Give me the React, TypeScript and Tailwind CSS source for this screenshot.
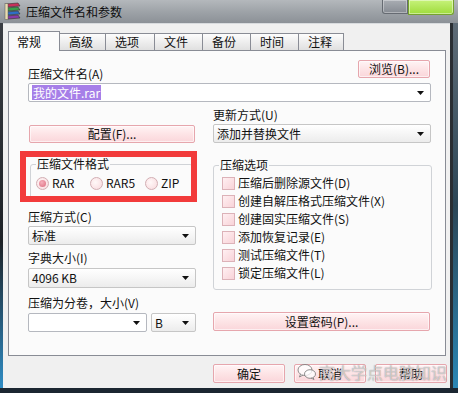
import React from "react";

const Arrow = () => (
  <svg width="7" height="4" viewBox="0 0 7 4" className="shrink-0">
    <path d="M0 0H7L3.5 4Z" fill="#111" />
  </svg>
);

const RarIcon = () => (
  <svg width="19" height="19" viewBox="0 0 19 19">
    <g stroke="#333" strokeWidth="0.6">
      <path d="M3 2 L15 1 L17 4 L5 5 Z" fill="#c8305a" />
      <path d="M3 6 L15 5 L17 8 L5 9 Z" fill="#3aa04a" />
      <path d="M3 10 L15 9 L17 12 L5 13 Z" fill="#2e6fc8" />
      <path d="M3 14 L15 13 L17 16 L5 17 Z" fill="#8a3aa8" />
    </g>
    <rect x="2" y="1.5" width="3" height="16" fill="#e8dcb0" stroke="#555" strokeWidth="0.5" />
  </svg>
);

const WeChat = () => (
  <svg width="20" height="18" viewBox="0 0 20 18">
    <g fill="rgba(255,255,255,0.75)" stroke="rgba(110,110,110,0.75)" strokeWidth="1">
      <ellipse cx="8" cy="7" rx="7" ry="5.5" />
      <path d="M3.5 11 L2.5 14 L6 12" />
      <ellipse cx="13" cy="11" rx="5.5" ry="4.3" />
      <path d="M16 14.5 L17 16.5 L14 15" />
    </g>
  </svg>
);

function PinkBtn({ className = "", children }: { className?: string; children?: React.ReactNode }) {
  return (
    <div
      className={
        "flex items-center justify-center border border-[#e6a6ad] rounded-[2px] bg-[linear-gradient(180deg,#fff4f5_0%,#fde4e6_50%,#fad6da_100%)] shadow-[inset_0_0_0_1px_rgba(255,255,255,0.6)] " +
        className
      }
    >
      {children}
    </div>
  );
}

function Combo({
  className = "",
  children,
  white = false,
}: {
  className?: string;
  children?: React.ReactNode;
  white?: boolean;
}) {
  return (
    <div
      className={
        "flex items-center justify-between h-[19px] rounded-[2px] pl-[3px] pr-[6px] " +
        (white
          ? "border border-[#b5b8bf] bg-white "
          : "border border-[#c6c6c6] bg-[linear-gradient(180deg,#ffffff_0%,#f6f6f6_50%,#ececec_100%)] ") +
        className
      }
    >
      <div className="whitespace-nowrap">{children}</div>
      <Arrow />
    </div>
  );
}

function Radio({ checked = false }: { checked?: boolean }) {
  return (
    <div className="w-[13px] h-[13px] rounded-full border border-[#d2aeb3] bg-[radial-gradient(circle_at_40%_40%,#fff8f8,#f8d8dc)] flex items-center justify-center shrink-0">
      {checked && (
        <div className="w-[7px] h-[7px] rounded-full bg-[radial-gradient(circle_at_40%_35%,#f6b0bc,#dc6b7e)]" />
      )}
    </div>
  );
}

function Check() {
  return (
    <div className="w-[13px] h-[13px] border border-[#dcb2b8] bg-[linear-gradient(135deg,#fff0f2,#f8d3d8)] shrink-0" />
  );
}

const tabs: { label: string; w: string }[] = [
  { label: "高级", w: "w-[46px]" },
  { label: "选项", w: "w-[49px]" },
  { label: "文件", w: "w-[48px]" },
  { label: "备份", w: "w-[48px]" },
  { label: "时间", w: "w-[48px]" },
  { label: "注释", w: "w-[45px]" },
];

const options = [
  "压缩后删除源文件(D)",
  "创建自解压格式压缩文件(X)",
  "创建固实压缩文件(S)",
  "添加恢复记录(E)",
  "测试压缩文件(T)",
  "锁定压缩文件(L)",
];

export default function App() {
  return (
    <div className="w-[458px] h-[393px] overflow-hidden flex flex-col bg-[#1b2631] text-[#111] text-[12px] leading-[14px] font-['SimSun','Noto_Sans_CJK_SC',sans-serif] relative">
      {/* title bar */}
      <div className="h-[23px] shrink-0 flex items-start bg-[linear-gradient(180deg,#b4b8bc_0%,#9ca1a6_55%,#8c9197_100%)]">
        <div className="mt-[2px] ml-[3px]">
          <RarIcon />
        </div>
        <div className="ml-[4px] mt-[5px] text-[12px] leading-[14px] text-[#0d0d0d]">压缩文件名和参数</div>
        <div className="ml-auto mr-[4px] flex">
          <div className="w-[26px] h-[14px] border border-t-0 border-[#666b72] rounded-bl-[3px] bg-[linear-gradient(180deg,#a9adb3,#868b92)] shadow-[inset_0_0_0_1px_rgba(255,255,255,0.35)]" />
          <div className="w-[46px] h-[15px] border border-t-0 border-[#76a22e] rounded-br-[3px] bg-[linear-gradient(180deg,#c6f27a,#9fdc3c)] shadow-[inset_0_0_0_1px_rgba(255,255,255,0.45)]" />
        </div>
      </div>

      {/* window row */}
      <div className="h-[365px] shrink-0 flex">
        <div className="w-[3px] bg-[linear-gradient(180deg,#3a3e44_0%,#1d2126_60%,#2f8cc4_100%)]" />
        <div className="w-[447px] bg-[#f0f0f0] border-t border-[#d8dbde] pt-[7px] pl-[5px]">
          {/* tabs */}
          <div className="flex items-end h-[19px]">
            <div className="w-[52px] h-[20px] -mb-[1px] relative z-10 border border-b-0 border-[#898c95] bg-[#fbfbfb] flex items-start pt-[3px] pl-[8px]">
              常规
            </div>
            {tabs.map((t) => (
              <div
                key={t.label}
                className={
                  t.w +
                  " h-[17px] border border-b-0 border-l-0 border-[#898c95] bg-[linear-gradient(180deg,#fdfdfd_0%,#eeeeee_50%,#e0e0e0_100%)] flex items-center pl-[9px]"
                }
              >
                {t.label}
              </div>
            ))}
          </div>

          {/* panel */}
          <div className="w-[438px] h-[306px] border border-[#898c95] bg-[#fbfbfb] pl-[19px] pr-[14px]">
            <div className="mt-[9px] flex items-start justify-between">
              <div className="mt-[7px]">压缩文件名(A)</div>
              <PinkBtn className="w-[72px] h-[18px] mr-[1px]">浏览(B)...</PinkBtn>
            </div>
            <Combo white className="mt-[2px] pl-[1px]">
              <span className="bg-[#a67fe8] text-white px-[1px] leading-[15px] inline-block">我的文件.rar</span>
            </Combo>

            <div className="flex">
              {/* left column */}
              <div className="w-[168px] flex flex-col">
                <PinkBtn className="mt-[23px] ml-[1px] w-[166px] h-[18px]">配置(F)...</PinkBtn>
                <div className="mt-[21px] ml-[2px] w-[163px] h-[36px] relative border border-[#d0d3d7] rounded-[3px]">
                  <div className="absolute -top-[8px] left-[5px] px-[1px] bg-[#fbfbfb]">压缩文件格式</div>
                  <div className="flex items-center pt-[11px] pl-[5px]">
                    <div className="w-[54px] flex items-center gap-[3px]">
                      <Radio checked />
                      <span>RAR</span>
                    </div>
                    <div className="w-[55px] flex items-center gap-[3px]">
                      <Radio />
                      <span>RAR5</span>
                    </div>
                    <div className="flex items-center gap-[3px]">
                      <Radio />
                      <span>ZIP</span>
                    </div>
                  </div>
                  <div className="absolute -left-[11px] -top-[14px] w-[177px] h-[51px] border-[6px] border-[#f23b3b] pointer-events-none" />
                </div>
                <div className="mt-[10px]">压缩方式(C)</div>
                <Combo className="mt-[2px]">标准</Combo>
                <div className="mt-[6px]">字典大小(I)</div>
                <Combo className="mt-[3px] h-[20px]">4096 KB</Combo>
                <div className="mt-[8px]">压缩为分卷，大小(V)</div>
                <div className="mt-[3px] flex gap-[4px]">
                  <Combo white className="w-[119px]">
                    {""}
                  </Combo>
                  <Combo className="w-[45px]">B</Combo>
                </div>
              </div>

              {/* right column */}
              <div className="ml-[17px] w-[218px] flex flex-col">
                <div className="mt-[6px]">更新方式(U)</div>
                <Combo className="mt-[2px]">添加并替换文件</Combo>
                <div className="mt-[22px] w-[219px] h-[125px] relative border border-[#d0d3d7] rounded-[3px] pt-[8px] pl-[8px]">
                  <div className="absolute -top-[8px] left-[5px] px-[1px] bg-[#fbfbfb]">压缩选项</div>
                  {options.map((o) => (
                    <div key={o} className="h-[18px] flex items-center gap-[3px]">
                      <Check />
                      <span>{o}</span>
                    </div>
                  ))}
                </div>
                <PinkBtn className="mt-[22px] w-[217px] h-[19px]">设置密码(P)...</PinkBtn>
              </div>
            </div>
          </div>

          {/* bottom buttons */}
          <div className="mt-[8px] flex justify-end gap-[9px] pr-[3px]">
            <PinkBtn className="w-[72px] h-[19px]">确定</PinkBtn>
            <PinkBtn className="w-[72px] h-[19px]">取消</PinkBtn>
            <PinkBtn className="w-[72px] h-[19px]">帮助</PinkBtn>
          </div>
        </div>
        <div className="flex-1 flex">
          <div className="w-[3px] bg-[#2a2e33]" />
          <div className="flex-1 bg-[linear-gradient(180deg,#5e6b76_0%,#2c4656_50%,#2b86b4_100%)]" />
        </div>
      </div>

      {/* watermark */}
      <div className="absolute left-[297px] top-[363px] flex items-center gap-[2px] pointer-events-none">
        <WeChat />
        <span className="text-[16px] leading-[18px] text-[rgba(255,255,255,0.55)] [text-shadow:0_0_1px_rgba(80,80,80,0.7)]">
          高大学点电脑知识
        </span>
      </div>
    </div>
  );
}
